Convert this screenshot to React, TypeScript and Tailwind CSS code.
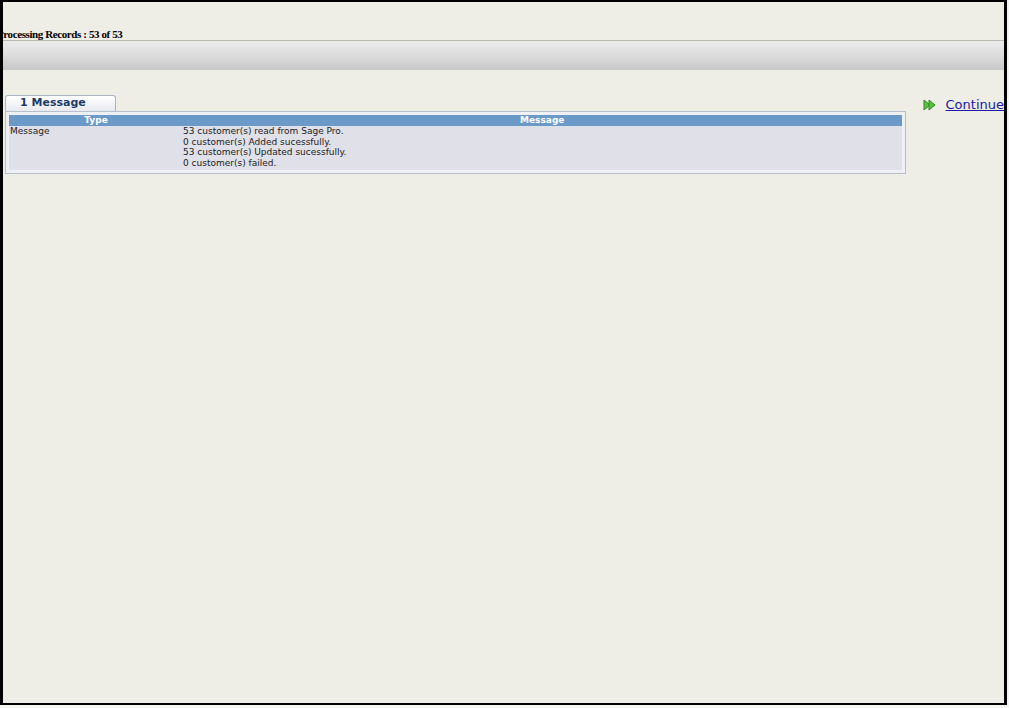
export default function App() {
    const lines = [
        '53 customer(s) read from Sage Pro.',
        '0 customer(s) Added sucessfully.',
        '53 customer(s) Updated sucessfully.',
        '0 customer(s) failed.',
    ];
    return (
        <div className="h-[708px] w-[1009px] overflow-hidden bg-[#f4f4f0]">
            <div className="flex h-[705px] w-[1007px] flex-col overflow-hidden border-y-2 border-l-[3px] border-r-[3px] border-black bg-[#eeede6]">
                <div className="mt-[24px] -ml-[6px] h-[14px] font-[family-name:Liberation_Serif,serif] text-[11px] font-bold tracking-[-0.4px] text-black">
                    Processing Records : 53 of 53
                </div>
                <div className="h-[30px] border-t border-[#b8b8b0] bg-gradient-to-b from-[#ececec] via-[#dcdcdc] to-[#c8c8c8]" />
                <div className="mt-[25px] flex items-start pl-[2px]">
                    <div className="w-[907px] font-[family-name:DejaVu_Sans,sans-serif]">
                        <div className="flex h-[16px] w-[111px] items-end rounded-t-[3px] border border-b-0 border-[#aab4c4] bg-gradient-to-b from-white to-[#e8eaf0] pl-[14px] text-[11px] font-bold text-[#1d3c6a]">
                            1 Message
                        </div>
                        <div className="border border-[#b6c0cc] bg-[#eef0f4] p-[3px]">
                            <div className="grid grid-cols-[174px_1fr] bg-[#6b99c8] text-[9px] font-bold leading-[11px] text-white">
                                <div className="text-center">Type</div>
                                <div className="text-center">Message</div>
                            </div>
                            <div className="grid grid-cols-[174px_1fr] bg-[#dfe0e8] pb-[2px] text-[9px] leading-[10.5px] text-[#222]">
                                <div className="pl-[1px]">Message</div>
                                <div>
                                    {lines.map((l) => (
                                        <div key={l}>{l}</div>
                                    ))}
                                </div>
                            </div>
                        </div>
                    </div>
                    <div className="ml-[17px] flex items-center gap-[9px] font-[family-name:DejaVu_Sans,sans-serif] text-[13px]">
                        <svg width="14" height="12" viewBox="0 0 14 12">
                            <path d="M1 1 L7 6 L1 11 Z" fill="#5cc040" stroke="#2c8a20" strokeWidth="1" />
                            <path d="M6 1 L12 6 L6 11 Z" fill="#5cc040" stroke="#2c8a20" strokeWidth="1" />
                        </svg>
                        <a href="#" className="whitespace-nowrap text-[#1a1aa6] underline">
                            Continue
                        </a>
                    </div>
                </div>
            </div>
        </div>
    );
}
